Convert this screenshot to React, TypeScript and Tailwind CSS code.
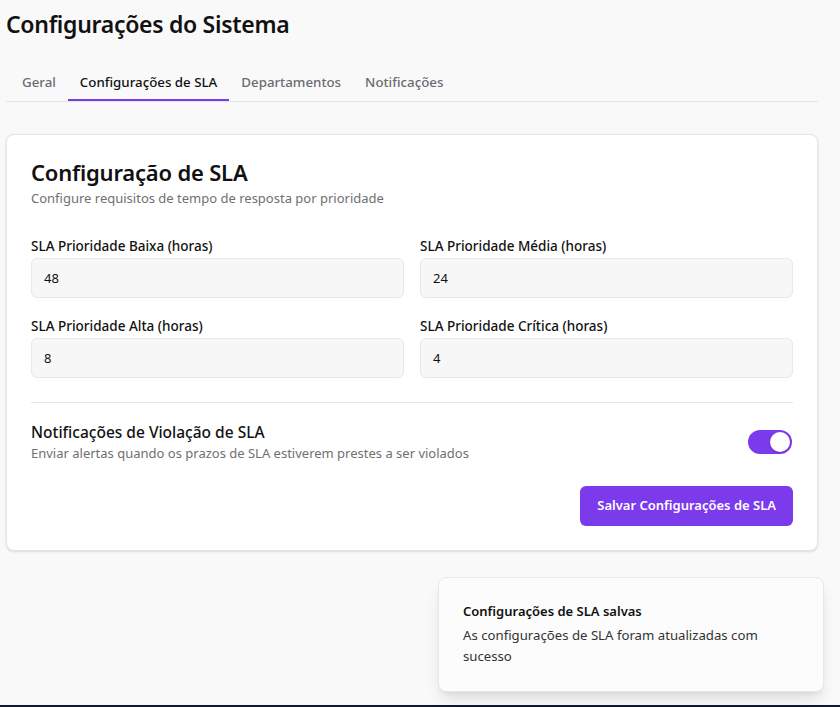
import { useState } from "react";

const fields = [
  { label: "SLA Prioridade Baixa (horas)", value: "48" },
  { label: "SLA Prioridade Média (horas)", value: "24" },
  { label: "SLA Prioridade Alta (horas)", value: "8" },
  { label: "SLA Prioridade Crítica (horas)", value: "4" },
];

const tabs = ["Geral", "Configurações de SLA", "Departamentos", "Notificações"];

export default function App() {
  const [on, setOn] = useState(true);

  return (
    <div
      className="relative flex h-[707px] flex-col bg-[#f9f9f9] text-[#111111]"
      style={{ fontFamily: '"Noto Sans", "Open Sans", sans-serif' }}
    >
      <div className="flex-1 pl-[6px] pr-[22px]">
        <h1 className="pt-[7px] text-[23px] font-semibold leading-[34px] tracking-[-0.3px]">
          Configurações do Sistema
        </h1>

        <div className="mt-[32px] flex border-b border-[#e5e5e5] pl-[4px]">
          {tabs.map((t, i) => (
            <div
              key={t}
              className={
                i === 1
                  ? "border-b-2 border-[#7c3aed] px-3 pb-[6px] text-[13.3px] font-medium text-[#111111]"
                  : "border-b-2 border-transparent px-3 pb-[6px] text-[13.3px] font-medium text-[#6b6b72]"
              }
            >
              {t}
            </div>
          ))}
        </div>

        <div className="mt-[32px] rounded-lg border border-[#e6e6e6] bg-white px-6 pb-6 pt-[21px] shadow-sm">
          <h2 className="text-[22px] font-semibold leading-[32px] tracking-[-0.2px]">
            Configuração de SLA
          </h2>
          <p className="text-[13px] leading-[20px] text-[#707070]">
            Configure requisitos de tempo de resposta por prioridade
          </p>

          <div className="mt-[28px] grid grid-cols-2 gap-x-4 gap-y-[18px]">
            {fields.map((f) => (
              <div key={f.label} className="flex flex-col gap-[2px]">
                <label className="text-[13.5px] font-medium leading-[20px]">
                  {f.label}
                </label>
                <input
                  defaultValue={f.value}
                  className="h-10 rounded-md border border-[#e8e8e8] bg-[#f7f7f7] px-3 text-[13px] outline-none"
                />
              </div>
            ))}
          </div>

          <div className="mt-6 border-t border-[#e5e5e5]" />

          <div className="mt-[18px] flex items-center justify-between">
            <div>
              <div className="text-[15.5px] font-medium leading-[22px]">
                Notificações de Violação de SLA
              </div>
              <div className="text-[13px] leading-[20px] text-[#707070]">
                Enviar alertas quando os prazos de SLA estiverem prestes a ser violados
              </div>
            </div>
            <button
              onClick={() => setOn(!on)}
              className="mr-[1px] flex h-6 w-11 items-center rounded-full bg-[#7c3aed] px-[2px]"
            >
              <span
                className={
                  on
                    ? "ml-auto h-5 w-5 rounded-full bg-white shadow"
                    : "h-5 w-5 rounded-full bg-white shadow"
                }
              />
            </button>
          </div>

          <div className="mt-[23px] flex justify-end">
            <button className="h-10 rounded-md bg-[#7c3aed] px-[17px] text-[13px] font-semibold text-white">
              Salvar Configurações de SLA
            </button>
          </div>
        </div>
      </div>

      <div className="absolute left-[438px] top-[577px] w-[386px] rounded-lg border border-[#e8e8e8] bg-[#fcfcfc] px-6 pb-[24px] pt-[23px] shadow-lg">
        <div className="text-[13px] font-semibold leading-[20px]">
          Configurações de SLA salvas
        </div>
        <div className="mt-[4px] text-[13.2px] leading-[21px] text-[#333333]">
          As configurações de SLA foram atualizadas com sucesso
        </div>
      </div>

      <div className="h-[2px] bg-[#111827]" />
    </div>
  );
}
